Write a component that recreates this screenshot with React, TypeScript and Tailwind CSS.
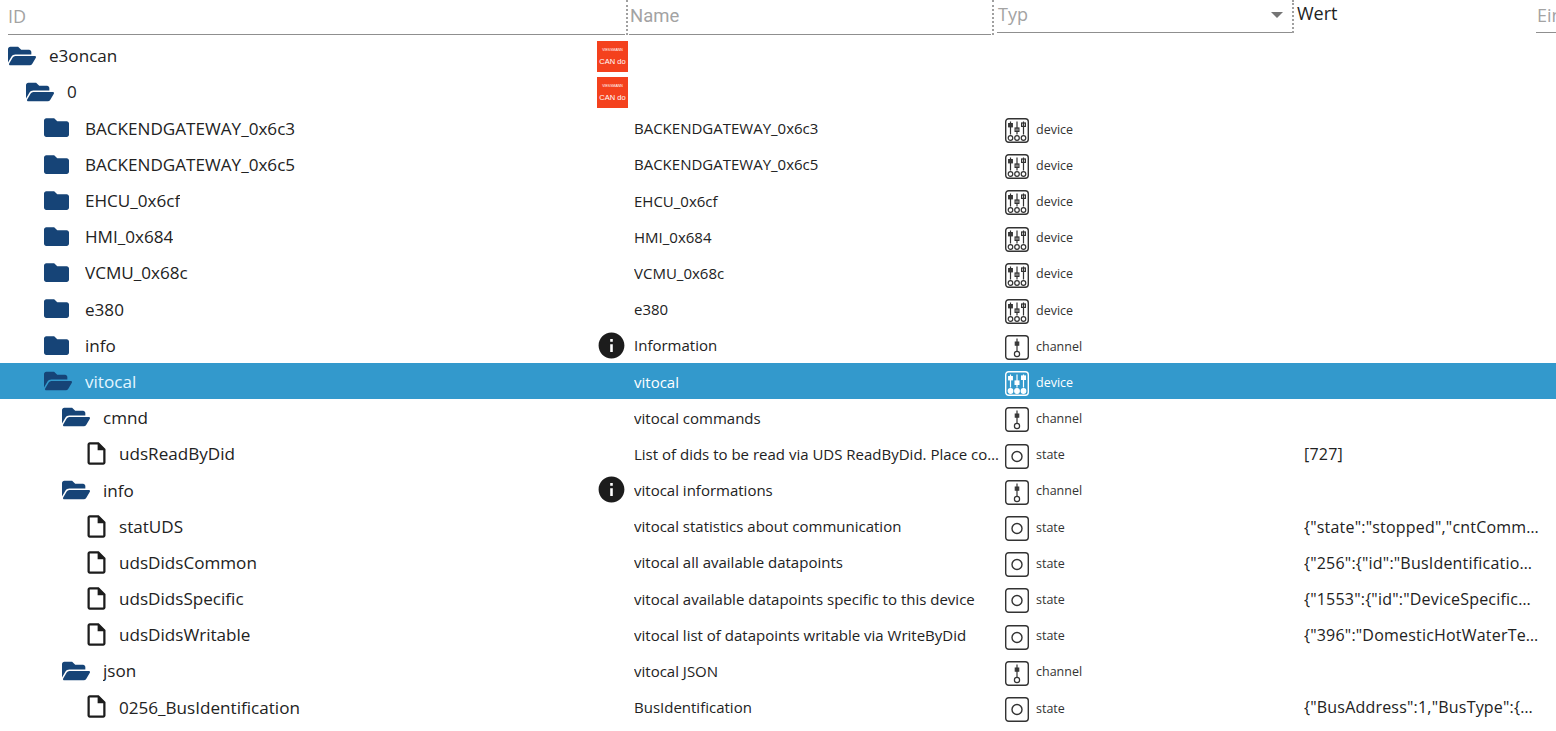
import { FaFolder, FaFolderOpen } from "react-icons/fa";
import { MdInfo, MdOutlineInsertDriveFile } from "react-icons/md";

type Kind = "open" | "closed" | "file";
type ObjType = "device" | "channel" | "state";

type Row = {
  id: string;
  level: number;
  kind: Kind;
  name?: string;
  type?: ObjType;
  value?: string;
  badge?: "can" | "info";
  selected?: boolean;
};

const ROWS: Row[] = [
  { id: "e3oncan", level: 0, kind: "open", badge: "can" },
  { id: "0", level: 1, kind: "open", badge: "can" },
  { id: "BACKENDGATEWAY_0x6c3", level: 2, kind: "closed", name: "BACKENDGATEWAY_0x6c3", type: "device" },
  { id: "BACKENDGATEWAY_0x6c5", level: 2, kind: "closed", name: "BACKENDGATEWAY_0x6c5", type: "device" },
  { id: "EHCU_0x6cf", level: 2, kind: "closed", name: "EHCU_0x6cf", type: "device" },
  { id: "HMI_0x684", level: 2, kind: "closed", name: "HMI_0x684", type: "device" },
  { id: "VCMU_0x68c", level: 2, kind: "closed", name: "VCMU_0x68c", type: "device" },
  { id: "e380", level: 2, kind: "closed", name: "e380", type: "device" },
  { id: "info", level: 2, kind: "closed", name: "Information", type: "channel", badge: "info" },
  { id: "vitocal", level: 2, kind: "open", name: "vitocal", type: "device", selected: true },
  { id: "cmnd", level: 3, kind: "open", name: "vitocal commands", type: "channel" },
  {
    id: "udsReadByDid",
    level: 4,
    kind: "file",
    name: "List of dids to be read via UDS ReadByDid. Place comma separated list here",
    type: "state",
    value: "[727]",
  },
  { id: "info", level: 3, kind: "open", name: "vitocal informations", type: "channel", badge: "info" },
  {
    id: "statUDS",
    level: 4,
    kind: "file",
    name: "vitocal statistics about communication",
    type: "state",
    value: '{"state":"stopped","cntCommunication":0,"cntTotal":0}',
  },
  {
    id: "udsDidsCommon",
    level: 4,
    kind: "file",
    name: "vitocal all available datapoints",
    type: "state",
    value: '{"256":{"id":"BusIdentification","len":7}}',
  },
  {
    id: "udsDidsSpecific",
    level: 4,
    kind: "file",
    name: "vitocal available datapoints specific to this device",
    type: "state",
    value: '{"1553":{"id":"DeviceSpecificValue","len":4}}',
  },
  {
    id: "udsDidsWritable",
    level: 4,
    kind: "file",
    name: "vitocal list of datapoints writable via WriteByDid",
    type: "state",
    value: '{"396":"DomesticHotWaterTemperature"}',
  },
  { id: "json", level: 3, kind: "open", name: "vitocal JSON", type: "channel" },
  {
    id: "0256_BusIdentification",
    level: 4,
    kind: "file",
    name: "BusIdentification",
    type: "state",
    value: '{"BusAddress":1,"BusType":{"ID":1,"Text":"CanInternal"}}',
  },
];

const INDENT: Record<number, string> = {
  0: "pl-0",
  1: "pl-[18px]",
  2: "pl-[36px]",
  3: "pl-[54px]",
  4: "pl-[72px]",
};

function TypeIcon({ type, selected }: { type: ObjType; selected?: boolean }) {
  const fill = selected ? "#fff" : "none";
  return (
    <svg viewBox="0 0 24 25" width="24" height="25" fill="none" stroke="currentColor" strokeWidth="1.2" className="mt-px shrink-0">
      <rect x="0.7" y="0.7" width="22.6" height="23.6" rx="3" strokeWidth="1.4" />
      {type === "device" && (
        <>
          <path d="M5.5 3.5v13M12 3.5v13M18.5 3.5v13" />
          <rect x="3.6" y="5.5" width="3.8" height="3.4" fill={selected ? "#fff" : "#3a3a3a"} strokeWidth="1" />
          <rect x="10.1" y="10" width="3.8" height="3.4" fill={selected ? "#fff" : "none"} strokeWidth="1.2" />
          <rect x="16.6" y="5" width="3.8" height="3.4" fill={selected ? "#fff" : "none"} strokeWidth="1.2" />
          <circle cx="5.5" cy="20" r="2.3" fill={fill} />
          <circle cx="12" cy="20" r="2.3" fill={fill} />
          <circle cx="18.5" cy="20" r="2.3" fill={fill} />
        </>
      )}
      {type === "channel" && (
        <>
          <path d="M12 3.5v12.5" />
          <rect x="10.2" y="7" width="3.6" height="3.2" fill="#3a3a3a" strokeWidth="1" />
          <circle cx="12" cy="19" r="2.6" />
        </>
      )}
      {type === "state" && <circle cx="12" cy="12.5" r="5" strokeWidth="1.4" />}
    </svg>
  );
}

function CanBadge() {
  return (
    <div className="mt-px flex h-[31px] w-[31px] flex-col items-center justify-center gap-[5px] bg-[#f4411d] pt-[2px] text-white font-['Liberation_Sans',sans-serif]">
      <span className="text-[3.5px] leading-none">VIESSMANN</span>
      <span className="text-[7.5px] leading-none">CAN do</span>
    </div>
  );
}

function TreeIcon({ kind }: { kind: Kind }) {
  if (kind === "open") return <FaFolderOpen size={28} className="shrink-0 text-[#164477]" />;
  if (kind === "closed") return <FaFolder size={25} className="mr-[3px] shrink-0 text-[#164477]" />;
  return <MdOutlineInsertDriveFile size={27} className="mr-[-1px] ml-[3px] shrink-0 text-[#1c1c1c]" />;
}

function TreeRow({ row }: { row: Row }) {
  return (
    <div
      className={`flex h-[36.2px] items-center ${row.selected ? "bg-[#3399cc] text-white" : "text-[#222222]"}`}
    >
      <div className="flex h-full w-[634px] shrink-0 items-center pl-2 pr-[6px]">
        <div className={`flex min-w-0 flex-1 items-center ${INDENT[row.level]}`}>
          <TreeIcon kind={row.kind} />
          <span
            className={`truncate pt-px text-[17.1px] ${row.kind === "file" ? "ml-[10px]" : "ml-[13px]"} ${row.selected ? "text-[#e4f6ff]" : ""}`}
          >
            {row.id}
          </span>
        </div>
        {row.badge === "can" && <CanBadge />}
        {row.badge === "info" && <MdInfo size={31} className="mr-[1px] shrink-0 text-[#1c1c1c]" />}
      </div>
      <div className="w-[370px] shrink-0 truncate pr-[2px] pt-px text-[15px]">{row.name}</div>
      <div
        className={`flex w-[300px] shrink-0 items-center gap-[7px] pl-px pt-[4px] text-[12.5px] ${row.selected ? "" : "text-[#333333]"}`}
      >
        {row.type && <TypeIcon type={row.type} selected={row.selected} />}
        <span>{row.type}</span>
      </div>
      <div className="w-[235px] shrink-0 truncate pt-px text-[16px] tracking-[0.2px]">{row.value}</div>
    </div>
  );
}

export default function App() {
  return (
    <div className="h-[731px] w-[1556px] overflow-hidden bg-white font-['Open_Sans',sans-serif]">
      <div className="flex h-[37.5px] text-[18px] text-[#a3a3a3]">
        <div className="flex h-[35px] w-[628px] shrink-0 border-r-2 border-dotted border-[#a0a0a0] pl-2 pr-[1px]">
          <div className="flex h-[35px] flex-1 items-center border-b border-[#8f8f8f] pb-[2px]">ID</div>
        </div>
        <div className="flex h-[35px] w-[366px] shrink-0 border-r-2 border-dotted border-[#a0a0a0] pl-[1px] pr-[1px]">
          <div className="flex h-[35px] flex-1 items-center border-b border-[#8f8f8f] pl-px text-[18.5px] font-['Roboto',sans-serif]">
            Name
          </div>
        </div>
        <div className="flex h-[33px] w-[300px] shrink-0 border-r-2 border-dotted border-[#a0a0a0] pl-[3px]">
          <div className="flex h-[33px] flex-1 items-center justify-between border-b border-[#8f8f8f] pb-[3px] pl-px pr-[9px]">
            <span>Typ</span>
            <span className="h-0 w-0 border-x-[6px] border-t-[6px] border-x-transparent border-t-[#757575]" />
          </div>
        </div>
        <div className="h-[29px] w-[242px] shrink-0 pl-[3px] text-[#222222]">Wert</div>
        <div className="h-[33px] flex-1 border-b border-[#8f8f8f] pl-px pt-[2px]">Ein</div>
      </div>
      {ROWS.map((row) => (
        <TreeRow key={`${row.level}-${row.id}-${row.kind}`} row={row} />
      ))}
    </div>
  );
}
